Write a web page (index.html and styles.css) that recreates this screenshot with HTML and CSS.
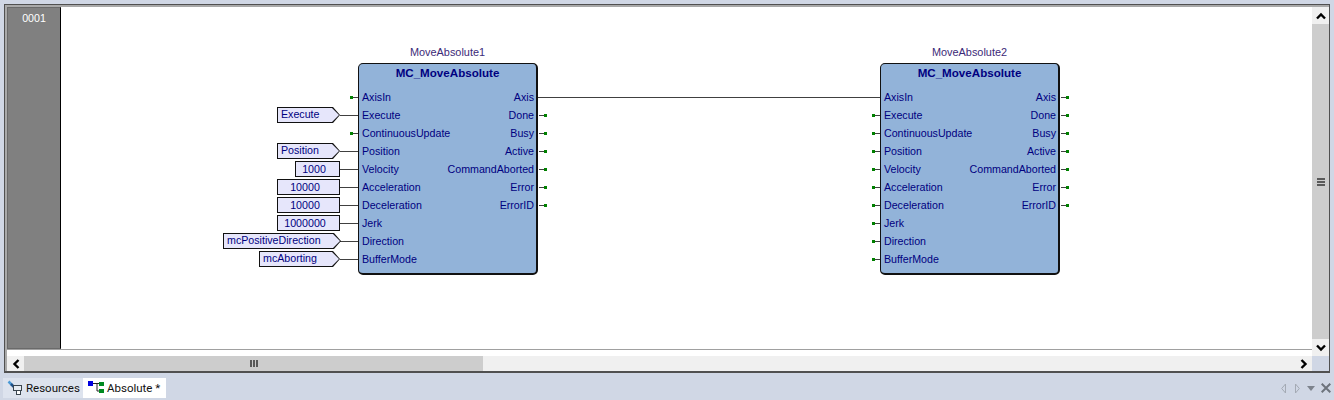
FILE: index.html
```html
<!DOCTYPE html>
<html lang="en">
<head>
<meta charset="utf-8">
<title>Absolute</title>
<link rel="stylesheet" href="styles.css">
</head>
<body>
<main class="pane">
  <div class="pane-top">
    <div class="sheet">
      <div class="sheet-main">
        <div class="rail"><span class="rung">0001</span></div>
        <div class="canvas">
          <div class="wire axis-wire"></div>

          <section class="fb fb-one">
            <div class="fb-name">MoveAbsolute1</div>
            <div class="fb-box">
              <div class="fb-title">MC_MoveAbsolute</div>
              <div class="fb-pins">
                <div class="pin-col">
                  <div class="pin"><i class="stub in open"></i>AxisIn</div>
                  <div class="pin"><i class="stub in"></i><b class="lit var w62">Execute</b>Execute</div>
                  <div class="pin"><i class="stub in open"></i>ContinuousUpdate</div>
                  <div class="pin"><i class="stub in"></i><b class="lit var w62">Position</b>Position</div>
                  <div class="pin"><i class="stub in"></i><b class="lit w44">1000</b>Velocity</div>
                  <div class="pin"><i class="stub in"></i><b class="lit w62">10000</b>Acceleration</div>
                  <div class="pin"><i class="stub in"></i><b class="lit w62">10000</b>Deceleration</div>
                  <div class="pin"><i class="stub in"></i><b class="lit w62">1000000</b>Jerk</div>
                  <div class="pin"><i class="stub in"></i><b class="lit var w116">mcPositiveDirection</b>Direction</div>
                  <div class="pin"><i class="stub in"></i><b class="lit var w80">mcAborting</b>BufferMode</div>
                </div>
                <div class="pin-col right">
                  <div class="pin">Axis</div>
                  <div class="pin">Done<i class="stub out open"></i></div>
                  <div class="pin">Busy<i class="stub out open"></i></div>
                  <div class="pin">Active<i class="stub out open"></i></div>
                  <div class="pin">CommandAborted<i class="stub out open"></i></div>
                  <div class="pin">Error<i class="stub out open"></i></div>
                  <div class="pin">ErrorID<i class="stub out open"></i></div>
                </div>
              </div>
            </div>
          </section>

          <section class="fb fb-two">
            <div class="fb-name">MoveAbsolute2</div>
            <div class="fb-box">
              <div class="fb-title">MC_MoveAbsolute</div>
              <div class="fb-pins">
                <div class="pin-col">
                  <div class="pin">AxisIn</div>
                  <div class="pin"><i class="stub in open"></i>Execute</div>
                  <div class="pin"><i class="stub in open"></i>ContinuousUpdate</div>
                  <div class="pin"><i class="stub in open"></i>Position</div>
                  <div class="pin"><i class="stub in open"></i>Velocity</div>
                  <div class="pin"><i class="stub in open"></i>Acceleration</div>
                  <div class="pin"><i class="stub in open"></i>Deceleration</div>
                  <div class="pin"><i class="stub in open"></i>Jerk</div>
                  <div class="pin"><i class="stub in open"></i>Direction</div>
                  <div class="pin"><i class="stub in open"></i>BufferMode</div>
                </div>
                <div class="pin-col right">
                  <div class="pin">Axis<i class="stub out open"></i></div>
                  <div class="pin">Done<i class="stub out open"></i></div>
                  <div class="pin">Busy<i class="stub out open"></i></div>
                  <div class="pin">Active<i class="stub out open"></i></div>
                  <div class="pin">CommandAborted<i class="stub out open"></i></div>
                  <div class="pin">Error<i class="stub out open"></i></div>
                  <div class="pin">ErrorID<i class="stub out open"></i></div>
                </div>
              </div>
            </div>
          </section>
        </div>
      </div>
    </div>
    <div class="vbar">
      <div class="arrow"><svg width="10" height="8" viewBox="0 0 10 8"><path d="M1 6.500 5 2.500 9 6.500" class="chev"/></svg></div>
      <div class="track"><svg class="grip" width="8" height="8" viewBox="0 0 8 8"><path d="M0 1h8M0 4h8M0 7h8"/></svg></div>
      <div class="arrow"><svg width="10" height="8" viewBox="0 0 10 8"><path d="M1 1.500 5 5.500 9 1.500" class="chev"/></svg></div>
    </div>
  </div>
  <div class="pane-bottom">
    <div class="hbar">
      <div class="arrow"><svg width="8" height="10" viewBox="0 0 8 10"><path d="M6.500 1 2.500 5 6.500 9" class="chev"/></svg></div>
      <div class="thumb"><svg class="grip" width="8" height="7" viewBox="0 0 8 7"><path d="M1 0v7M4 0v7M7 0v7"/></svg></div>
      <div class="hfill"></div>
      <div class="arrow"><svg width="8" height="10" viewBox="0 0 8 10"><path d="M1.500 1 5.500 5 1.500 9" class="chev"/></svg></div>
    </div>
    <div class="corner"></div>
  </div>
</main>
<footer class="tabs">
  <div class="tab">
    <svg width="16" height="16" viewBox="0 0 16 16"><path d="M1.500 1.500 4.500 4.500" stroke="#4a9ad6" stroke-width="2.500"/><path d="M4 4 8 8" stroke="#1f4f86" stroke-width="2.500"/><rect x="6.500" y="5.500" width="8" height="5" fill="#e6ebf2" stroke="#3b4650"/><rect x="9.500" y="10.500" width="4" height="4" fill="#fff" stroke="#3b4650"/></svg>
    Resources
  </div>
  <div class="tab active">
    <svg width="17" height="16" viewBox="0 0 17 16"><rect x="0" y="1" width="5" height="5" fill="#0000e0"/><rect x="11" y="2" width="5" height="4" fill="#008a20"/><rect x="11" y="9" width="5" height="4" fill="#008a20"/><path d="M5 3.500h6M9 3.500v7.500h2" fill="none" stroke="#222"/></svg>
    Absolute *
  </div>
  <div class="tab-tools">
    <svg class="nav-prev" width="5" height="11" viewBox="0 0 5 11"><path d="M4.500 1 .7 5.500 4.500 10Z" fill="none" stroke="#a4aab4"/></svg>
    <svg width="5" height="11" viewBox="0 0 5 11"><path d="M.5 1 4.300 5.500 .5 10Z" fill="none" stroke="#a4aab4"/></svg>
    <svg width="8" height="5" viewBox="0 0 8 5"><path d="M0 0H8L4 5Z" fill="#7d838d"/></svg>
    <svg class="tab-close" width="10" height="10" viewBox="0 0 10 10"><path d="M.7 .7 9.300 9.300M9.300 .7 .7 9.300" stroke="#6d737c" stroke-width="2"/></svg>
  </div>
</footer>
</body>
</html>
```
FILE: styles.css
```css
* { box-sizing: border-box; }
html, body { margin: 0; height: 400px; overflow: hidden; }
body {
  width: 1334px;
  background: #d0d7e5;
  font: 10.67px "Liberation Sans", Arial, sans-serif;
  color: #000080;
  padding: 4px 0 0 4px;
  display: flex;
  flex-direction: column;
}
.pane {
  width: 1326px;
  height: 369px;
  flex: none;
  border: 1px solid #505050;
  border-bottom-width: 2px;
  background: #a9a9a9;
  padding: 2px 0 0 2px;
  display: flex;
  flex-direction: column;
}
.pane-top { display: flex; flex: none; height: 349px; }
.sheet { flex: 1; background: #fff; min-width: 0; }
.sheet-main { display: flex; height: 343px; border-bottom: 1px solid #a0a0a0; }
.rail {
  width: 54px;
  flex: none;
  background: #808080;
  border: 1px solid #6a6a6a;
  border-right: 1px solid #000;
  text-align: center;
  color: #fff;
  padding-top: 4px;
}
.rung { display: block; line-height: 13px; }
.canvas { flex: 1; position: relative; background: #fff; }
.vbar {
  width: 17px;
  flex: none;
  background: #f0f0f0;
  display: flex;
  flex-direction: column;
}
.vbar .track { flex: 1; background: #cdcdcd; display: flex; align-items: center; justify-content: center; }
.arrow { width: 17px; flex: none; display: flex; align-items: center; justify-content: center; background: #f0f0f0; }
.vbar .arrow { height: 17px; }
.chev { fill: none; stroke: #000; stroke-width: 2.4; }
.grip path { fill: none; stroke: #5a5a5a; stroke-width: 2; }
.pane-bottom { flex: 1; display: flex; min-height: 0; }
.hbar { flex: 1; display: flex; background: #f0f0f0; }
.corner { width: 17px; flex: none; background: #d0d7e5; }
.thumb { width: 459px; background: #cdcdcd; display: flex; align-items: center; justify-content: center; flex: none; }
.hfill { flex: 1; background: #f0f0f0; }

.wire { position: absolute; background: #404040; height: 1px; }
.axis-wire { left: 477px; top: 90px; width: 342px; }

.fb { position: absolute; width: 180px; top: 38px; }
.fb-one { left: 297px; }
.fb-two { left: 819px; }
.fb-name { text-align: center; height: 18px; line-height: 14px; color: #3c2a78; font-size: 10.9px; padding-right: 1px; }
.fb-box {
  height: 212px;
  background: #92b3d9;
  border: 1px solid #111;
  border-right-width: 2px;
  border-bottom-width: 2px;
  border-radius: 5px;
}
.fb-title { font-weight: bold; text-align: center; height: 18px; line-height: 18px; font-size: 11.6px; color: #000080; }
.fb-pins { display: flex; padding: 6px 2px 0 3px; }
.pin-col { display: flex; flex-direction: column; flex: 1 1 0; min-width: 0; }
.pin-col.right { align-items: flex-end; }
.pin { position: relative; height: 18px; line-height: 18px; white-space: nowrap; }
.stub { position: absolute; top: 9px; height: 1px; background: #404040; }
.stub.in { left: -22px; width: 18px; }
.stub.in.open { left: -9px; width: 5px; }
.stub.out { right: -10px; width: 5px; }
.stub.open::after {
  content: "";
  position: absolute;
  top: -1px;
  width: 3px;
  height: 3px;
  background: #008000;
}
.stub.in.open::after { left: -3px; }
.stub.out.open::after { right: -3px; }
.lit {
  position: absolute;
  font-weight: normal;
  top: 1px;
  height: 16px;
  background: #e6e6fb;
  border: 1px solid #111;
  line-height: 15px;
  text-align: center;
  padding-right: 7px;
  color: #000080;
}
.lit.w44 { width: 45px; left: -67px; }
.lit.w62 { width: 63px; left: -85px; }
.lit.w80 { width: 81px; left: -103px; }
.lit.w116 { width: 118px; left: -139px; }
.lit.var { padding: 0 8px 0 4px; text-align: left; background: transparent; border: 0; z-index: 0; line-height: 14px; }
.lit.var::before {
  content: "";
  position: absolute;
  inset: 0;
  z-index: -1;
  background: #111;
  clip-path: polygon(0 0, calc(100% - 7px) 0, 100% 50%, calc(100% - 7px) 100%, 0 100%);
}
.lit.var::after {
  content: "";
  position: absolute;
  inset: 1px;
  z-index: -1;
  background: #e6e6fb;
  clip-path: polygon(0 0, calc(100% - 7px) 0, 100% 50%, calc(100% - 7px) 100%, 0 100%);
}

.tabs { flex: 1; display: flex; align-items: flex-start; margin: 5px 0 0 -1px; color: #111; font-family: Roboto, "Liberation Sans", sans-serif; font-size: 11.5px; }
.tab { display: flex; align-items: center; gap: 3px; width: 80px; height: 20px; padding: 0 0 0 4px; background: #dde3ee; white-space: nowrap; }
.tab.active { width: 83px; background: #fff; gap: 2px; padding-left: 5px; }
.tab-tools { margin-left: auto; display: flex; align-items: center; gap: 7px; height: 20px; padding-right: 3px; }
.nav-prev { margin-right: 2px; }
.tab-close { margin-left: -1px; }
```
